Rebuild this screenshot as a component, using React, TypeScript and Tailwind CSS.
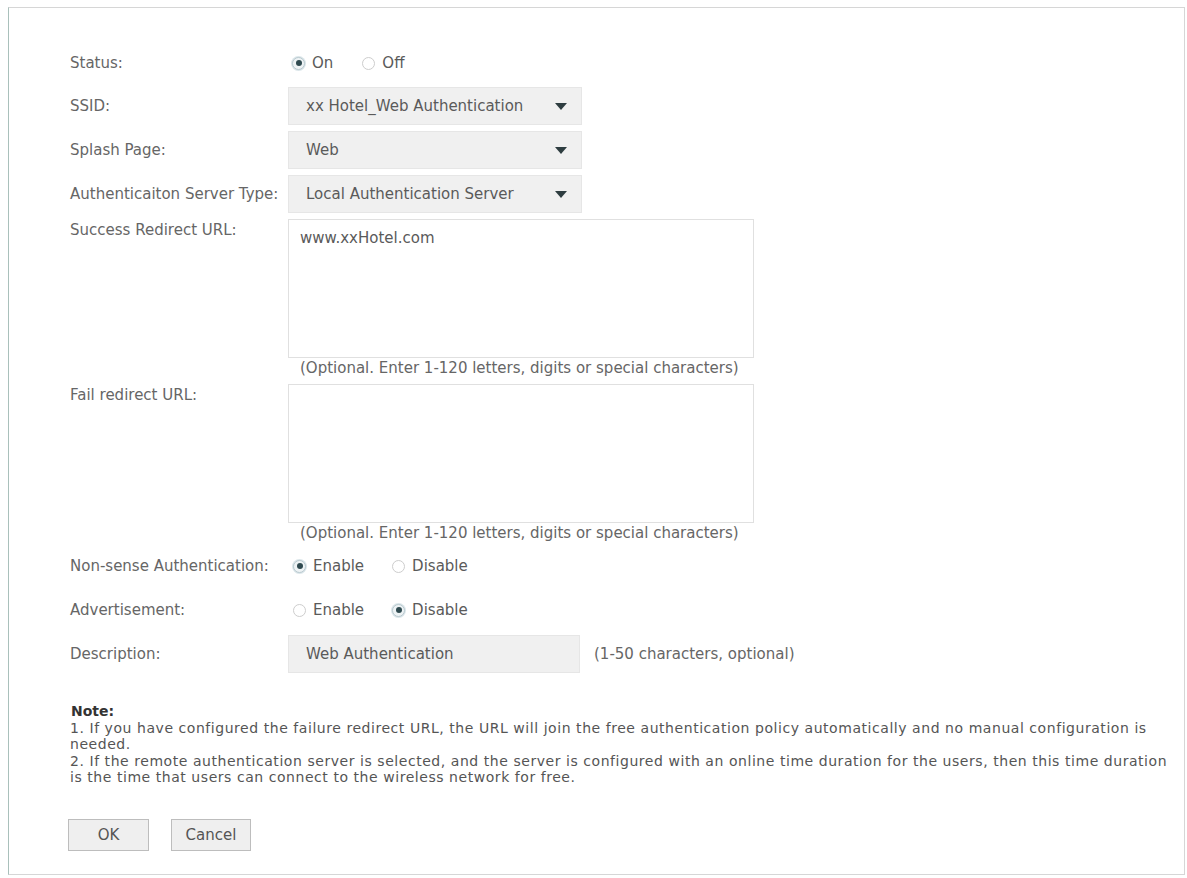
import type { ReactNode } from 'react';

const font = { fontFamily: '"DejaVu Sans", Verdana, sans-serif' };

function Radio({ checked, label }: { checked?: boolean; label: string }) {
  return (
    <span className="flex items-center">
      <span
        className={
          checked
            ? 'flex h-[13px] w-[13px] items-center justify-center rounded-full border border-[#b9c9cf] bg-[#eef3f5] shadow-[0_0_0_1px_#dbe6ea]'
            : 'flex h-[13px] w-[13px] items-center justify-center rounded-full border border-[#cdcdcd] bg-white'
        }
      >
        {checked && <span className="h-[6px] w-[6px] rounded-full bg-[#2f4a50]" />}
      </span>
      <span className="ml-[7px]">{label}</span>
    </span>
  );
}

function Row({ label, children, top }: { label: string; children: ReactNode; top?: boolean }) {
  return (
    <div className={top ? 'flex items-start' : 'flex h-[38px] items-center'}>
      <div className={top ? 'w-[218px] shrink-0 pt-[2px]' : 'w-[218px] shrink-0'}>{label}</div>
      {children}
    </div>
  );
}

function Select({ value }: { value: string }) {
  return (
    <div className="flex h-[38px] w-[294px] items-center justify-between border border-[#e6e6e6] bg-[#f0f0f0] pl-[17px] pr-[14px] text-[#5a5a5a]">
      <span>{value}</span>
      <svg width="12" height="7" viewBox="0 0 12 7">
        <path d="M0 0 H12 L6 7 Z" fill="#2e3d40" />
      </svg>
    </div>
  );
}

function Hint({ children }: { children: ReactNode }) {
  return <div className="flex h-[20px] items-center pl-[230px]">{children}</div>;
}

export default function App() {
  return (
    <div className="h-[878px] w-[1187px] bg-white text-[15px] leading-[18px] text-[#666]" style={font}>
      <div className="ml-[8px] h-[868px] w-[1177px] translate-y-[7px] border border-[#d6d6d6] border-l-[#a9c0bb] pl-[61px] pt-[36px]">
        <div className="flex flex-col gap-[6px]">
          <Row label="Status:">
            <div className="flex items-center gap-[29px] pl-[4px] text-[#5a5a5a]">
              <Radio checked label="On" />
              <Radio label="Off" />
            </div>
          </Row>
          <div className="-mt-[1px]">
            <Row label="SSID:">
              <Select value="xx Hotel_Web Authentication" />
            </Row>
          </div>
          <Row label="Splash Page:">
            <Select value="Web" />
          </Row>
          <Row label="Authenticaiton Server Type:">
            <Select value="Local Authentication Server" />
          </Row>
          <div>
            <Row label="Success Redirect URL:" top>
              <div className="h-[139px] w-[466px] border border-[#e0e0e0] bg-white pl-[11px] pt-[9px] text-[#5a5a5a]">
                www.xxHotel.com
              </div>
            </Row>
            <Hint>(Optional. Enter 1-120 letters, digits or special characters)</Hint>
          </div>
          <div>
            <Row label="Fail redirect URL:" top>
              <div className="h-[139px] w-[466px] border border-[#e0e0e0] bg-white" />
            </Row>
            <Hint>(Optional. Enter 1-120 letters, digits or special characters)</Hint>
          </div>
          <div className="mt-[-2px]">
            <Row label="Non-sense Authentication:">
              <div className="flex items-center gap-[28px] pl-[5px] text-[#5a5a5a]">
                <Radio checked label="Enable" />
                <Radio label="Disable" />
              </div>
            </Row>
          </div>
          <Row label="Advertisement:">
            <div className="flex items-center gap-[28px] pl-[5px] text-[#5a5a5a]">
              <Radio label="Enable" />
              <Radio checked label="Disable" />
            </div>
          </Row>
          <Row label="Description:">
            <div className="flex h-[38px] w-[292px] items-center border border-[#e6e6e6] bg-[#f0f0f0] pl-[17px] text-[#5a5a5a]">
              Web Authentication
            </div>
            <span className="ml-[14px]">(1-50 characters, optional)</span>
          </Row>
        </div>

        <div className="mt-[30px] text-[14px] leading-[16.5px] tracking-[0.55px] text-[#555]">
          <div className="pl-[1px] font-bold tracking-normal text-[#333]">Note:</div>
          <div className="whitespace-nowrap">
            1. If you have configured the failure redirect URL, the URL will join the free authentication policy automatically and no manual configuration is
          </div>
          <div>needed.</div>
          <div className="whitespace-nowrap">
            2. If the remote authentication server is selected, and the server is configured with an online time duration for the users, then this time duration
          </div>
          <div>is the time that users can connect to the wireless network for free.</div>
        </div>

        <div className="mt-[33px] flex gap-[22px] text-[#555]">
          <button className="h-[32px] w-[81px] -ml-[2px] border border-[#bdbdbd] bg-[#efefef]">OK</button>
          <button className="h-[32px] w-[80px] border border-[#bdbdbd] bg-[#efefef]">Cancel</button>
        </div>
      </div>
    </div>
  );
}
